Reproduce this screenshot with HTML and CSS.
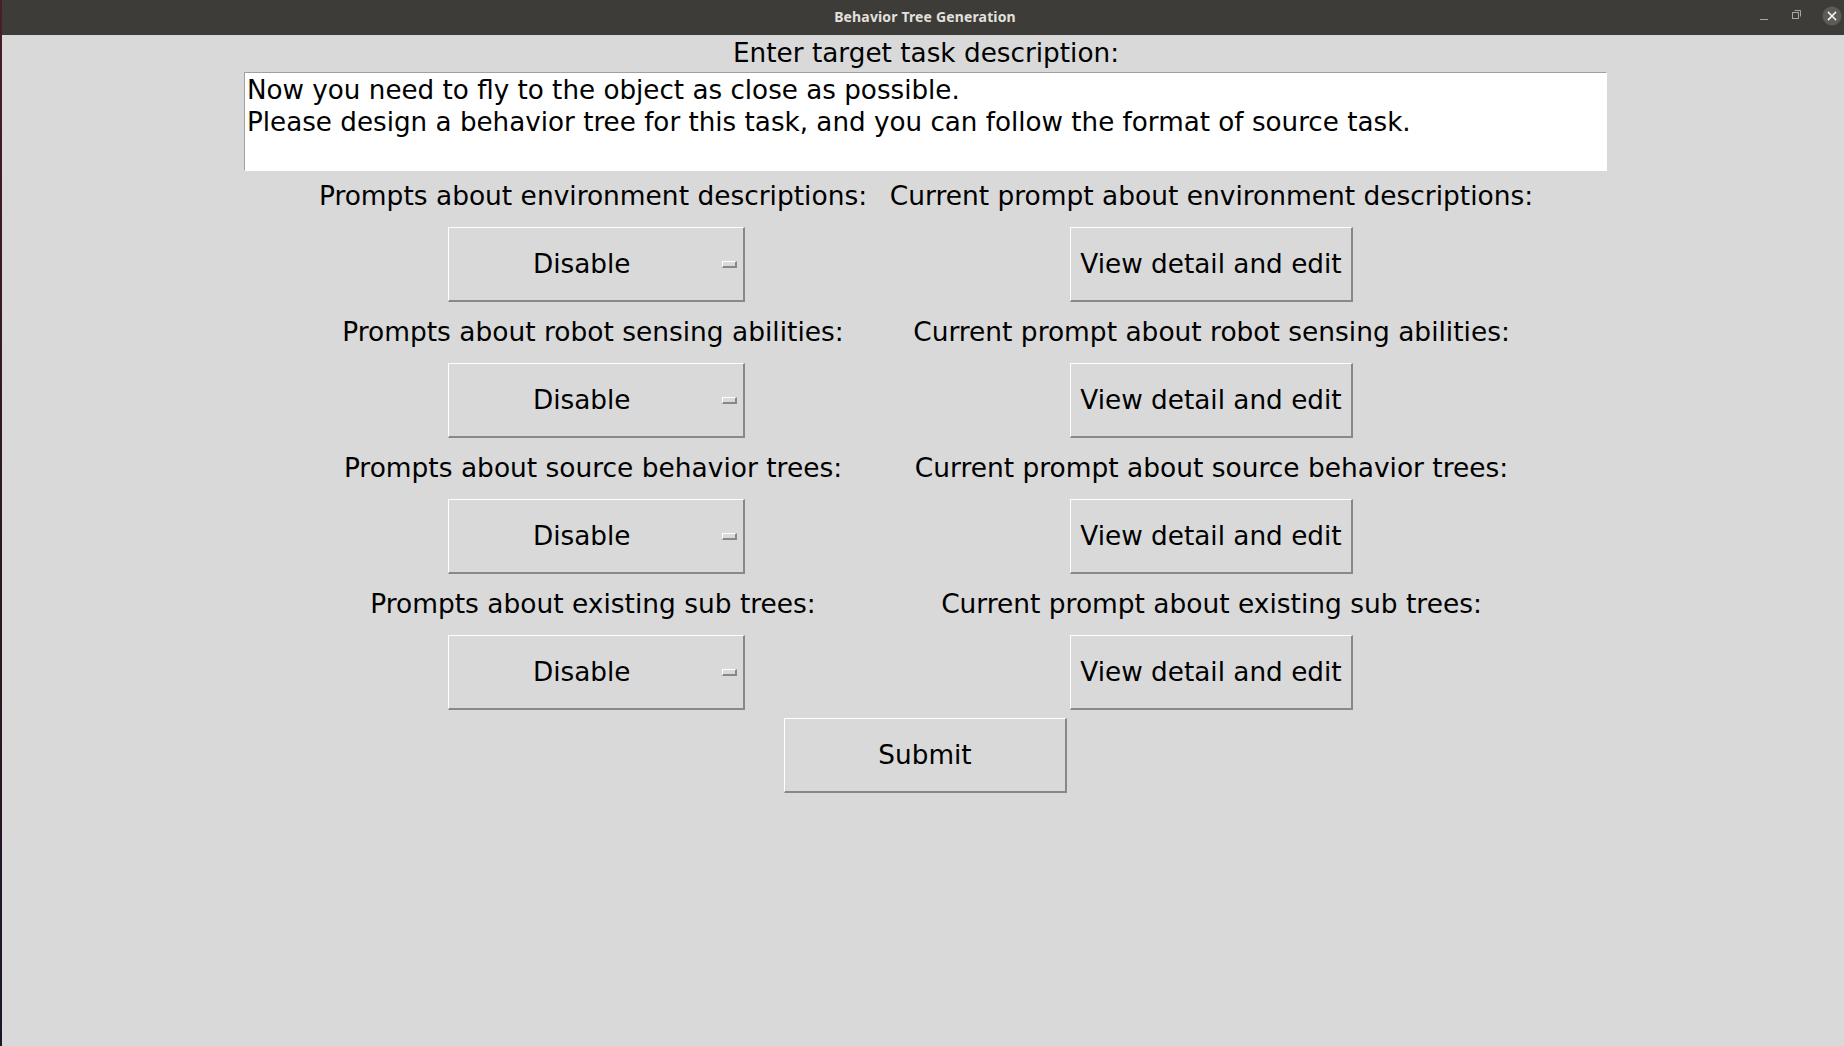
FILE: index.html
```html
<!DOCTYPE html>
<html lang="en">
<head>
<meta charset="utf-8">
<title>Behavior Tree Generation</title>
<link rel="stylesheet" href="styles.css">
</head>
<body>
<div class="window">
  <div class="titlebar">
    <div class="title">Behavior Tree Generation</div>
    <div class="controls">
      <svg class="ctl-min" width="12" height="12" viewBox="0 0 12 12"><rect x="2" y="6" width="8" height="1" fill="#a8a6a1"/></svg>
      <svg class="ctl-max" width="12" height="12" viewBox="0 0 12 12"><path d="M3.5 1.5 H9.5 V7.5" fill="none" stroke="#a8a6a1" stroke-width="1"/><rect x="1.5" y="3.5" width="6" height="6" fill="none" stroke="#a8a6a1" stroke-width="1"/></svg>
      <svg class="ctl-close" width="20" height="20" viewBox="0 0 20 20"><circle cx="10" cy="10" r="9.5" fill="#5c5b57"/><path d="M6.5 6.5 L13.5 13.5 M13.5 6.5 L6.5 13.5" stroke="#f4f4f4" stroke-width="1.6" stroke-linecap="square"/></svg>
    </div>
  </div>
  <main class="content">
    <div class="top-label">Enter target task description:</div>
    <div class="textbox">Now you need to fly to the object as close as possible.<br>Please design a behavior tree for this task, and you can follow the format of source task.</div>
    <div class="grid">
      <div class="lbl first">Prompts about environment descriptions:</div>
      <div class="lbl first">Current prompt about environment descriptions:</div>
      <div class="cell left"><div class="btn option"><span class="opt-text">Disable</span><span class="indicator"></span></div></div>
      <div class="cell"><div class="btn view">View detail and edit</div></div>

      <div class="lbl">Prompts about robot sensing abilities:</div>
      <div class="lbl">Current prompt about robot sensing abilities:</div>
      <div class="cell left"><div class="btn option"><span class="opt-text">Disable</span><span class="indicator"></span></div></div>
      <div class="cell"><div class="btn view">View detail and edit</div></div>

      <div class="lbl">Prompts about source behavior trees:</div>
      <div class="lbl">Current prompt about source behavior trees:</div>
      <div class="cell left"><div class="btn option"><span class="opt-text">Disable</span><span class="indicator"></span></div></div>
      <div class="cell"><div class="btn view">View detail and edit</div></div>

      <div class="lbl">Prompts about existing sub trees:</div>
      <div class="lbl">Current prompt about existing sub trees:</div>
      <div class="cell left"><div class="btn option"><span class="opt-text">Disable</span><span class="indicator"></span></div></div>
      <div class="cell"><div class="btn view">View detail and edit</div></div>
    </div>
    <div class="btn submit">Submit</div>
  </main>
</div>
</body>
</html>
```

FILE: styles.css
```css
html, body {
  margin: 0;
  padding: 0;
  height: 100%;
}
body {
  background: linear-gradient(180deg, #4a1d25 0%, #2a1822 50%, #1e1626 100%);
  font-family: "DejaVu Sans", "Liberation Sans", sans-serif;
  color: #000;
  overflow: hidden;
}
.window {
  margin-left: 2px;
  height: 100%;
  background: #d9d9d9;
  display: flex;
  flex-direction: column;
}
.titlebar {
  height: 35px;
  flex: 0 0 35px;
  background: #3d3c39;
  position: relative;
  display: flex;
  align-items: center;
  justify-content: center;
}
.title {
  font-family: "Noto Sans", "DejaVu Sans", sans-serif;
  font-weight: 700;
  font-size: 14px;
  letter-spacing: 0.15px;
  color: #e2e0dc;
  padding-bottom: 2px;
  padding-left: 4px;
}
.controls {
  position: absolute;
  right: 2px;
  top: 6px;
  display: flex;
  align-items: center;
}
.ctl-min { margin-right: 21px; margin-top: 6px; }
.ctl-max { margin-right: 19px; margin-top: -3px; }
.ctl-close { margin-top: 0; }

.content {
  display: flex;
  flex-direction: column;
  align-items: center;
  padding-left: 8px;
}
.top-label {
  height: 37px;
  line-height: 37px;
  font-size: 26.3px;
  white-space: nowrap;
  margin-left: -2px;
}
.textbox {
  box-sizing: border-box;
  width: 1363px;
  height: 99px;
  margin-left: -3px;
  background: #fff;
  border-top: 1px solid #a0a0a0;
  border-left: 1px solid #a0a0a0;
  border-right: 1px solid #fff;
  border-bottom: 1px solid #fff;
  padding: 1px 2px 0 2px;
  font-size: 26.2px;
  line-height: 32px;
  white-space: nowrap;
  overflow: hidden;
}
.grid {
  display: grid;
  grid-template-columns: 569px 668px;
}
.lbl {
  height: 61px;
  box-sizing: border-box;
  padding-bottom: 2px;
  display: flex;
  align-items: center;
  justify-content: center;
  font-size: 26.45px;
  white-space: nowrap;
}
.lbl.first {
  height: 56px;
  padding-bottom: 7px;
}
.cell {
  height: 75px;
  display: flex;
  justify-content: center;
}
.cell.left {
  padding-left: 7px;
}
.btn {
  box-sizing: border-box;
  height: 75px;
  background: #d9d9d9;
  border-top: 1px solid #ffffff;
  border-left: 1px solid #ffffff;
  border-right: 2px solid #888888;
  border-bottom: 2px solid #888888;
  display: flex;
  align-items: center;
  justify-content: center;
  font-size: 26.3px;
  white-space: nowrap;
}
.option {
  width: 297px;
  position: relative;
  justify-content: flex-start;
}
.opt-text {
  margin-left: 84px;
}
.indicator {
  position: absolute;
  left: 273px;
  top: 33px;
  box-sizing: border-box;
  width: 15px;
  height: 7px;
  border-top: 1px solid #ffffff;
  border-left: 1px solid #ffffff;
  border-right: 2px solid #888888;
  border-bottom: 2px solid #888888;
  background: #d9d9d9;
}
.view {
  width: 283px;
}
.submit {
  width: 283px;
  margin-top: 8px;
  margin-left: -3px;
}
```
